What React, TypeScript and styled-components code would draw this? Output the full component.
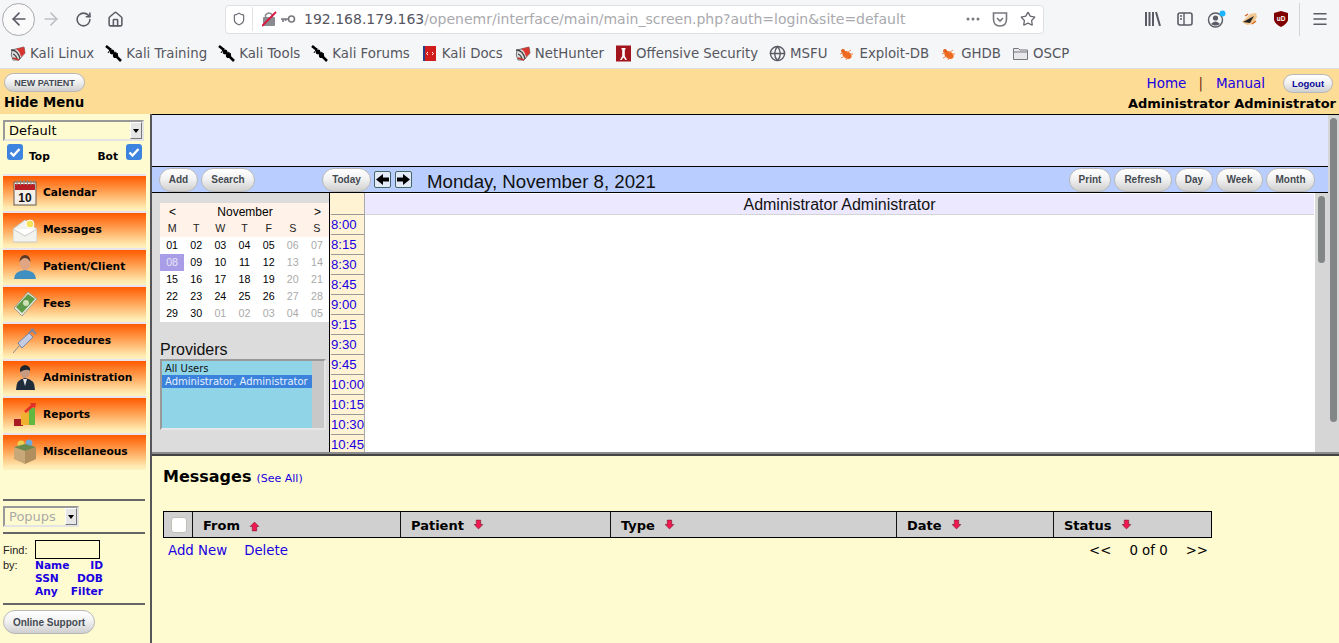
import { ReactNode } from "react";
import styled, { createGlobalStyle } from "styled-components";
import {
  ArrowLeft,
  ArrowRight,
  Globe,
  Home,
  Menu,
  RotateCw,
  Shield,
  Star,
} from "lucide-react";

const GlobalStyle = createGlobalStyle`
  html, body {
    margin: 0;
    padding: 0;
    background: #fffbd0;
  }
  * {
    box-sizing: border-box;
  }
`;

const sans = `"DejaVu Sans", sans-serif`;
const arial = `"Liberation Sans", Arial, sans-serif`;

const Page = styled.div`
  width: 1339px;
  height: 643px;
  display: flex;
  flex-direction: column;
  overflow: hidden;
  font-family: ${arial};
`;

/* browser chrome */
const NavBar = styled.div`
  height: 42px;
  background: #f5f6f8;
  display: flex;
  align-items: center;
  color: #5b5b66;
  padding-left: 2px;
`;

const BackCircle = styled.div`
  width: 33px;
  height: 33px;
  border-radius: 50%;
  border: 1px solid #a8a8ae;
  background: #fafafb;
  display: flex;
  align-items: center;
  justify-content: center;
  margin-top: -4px;
`;

const NavSlot = styled.div<{ $w: number; $faded?: boolean }>`
  width: ${(p) => p.$w}px;
  display: flex;
  align-items: center;
  justify-content: center;
  margin-top: -4px;
  color: ${(p) => (p.$faded ? "#c0c0c4" : "#5b5b66")};
`;

const UrlBar = styled.div`
  width: 819px;
  height: 29px;
  margin-left: 94px;
  margin-top: -4px;
  background: #fff;
  border: 1px solid #e0e0e4;
  border-radius: 4px;
  display: flex;
  align-items: center;
  padding-left: 6px;
  font-family: ${sans};
  font-size: 14px;
  color: #a9a9ae;
`;

const UrlSep = styled.div`
  width: 1px;
  height: 24px;
  background: #e4e4e8;
  margin: 0 9px 0 6px;
`;

const UrlHost = styled.span`
  color: #55555f;
`;

const UrlText = styled.div`
  margin-left: 8px;
  white-space: nowrap;
  flex: 1;
`;

const UrlActions = styled.div`
  display: flex;
  align-items: center;
  gap: 12px;
  padding-right: 7px;
  color: #6a6a72;
`;

const ToolIcons = styled.div`
  display: flex;
  align-items: center;
  margin-left: 93px;
  margin-top: -4px;
  color: #5b5b66;
`;

const ToolSlot = styled.div<{ $w?: number }>`
  width: ${(p) => p.$w ?? 32}px;
  display: flex;
  justify-content: center;
  align-items: center;
`;

const ToolSep = styled.div`
  width: 1px;
  height: 33px;
  background: #d4d4d8;
  margin: 0 6px 0 2px;
`;

const BookmarkBar = styled.div`
  height: 27px;
  background: #f5f6f8;
  border-bottom: 1px solid #dcdde0;
  display: flex;
  align-items: center;
  gap: 11px;
  padding: 0 0 4px 9px;
  font-family: ${sans};
  font-size: 13.33px;
  color: #56565f;
`;

const Bookmark = styled.div`
  display: flex;
  align-items: center;
  gap: 4px;
  white-space: nowrap;
`;

const BookmarkImg = ({ children }: { children: ReactNode }) => (
  <svg width="17" height="17" viewBox="0 0 17 17">
    {children}
  </svg>
);

const KaliIcon = () => (
  <BookmarkImg>
    <path d="M3 5 L15 2 L16 8 L10 15 L4 15 Q1 10 3 5 Z" fill="#dedede" stroke="#555" strokeWidth="0.8" />
    <path d="M7 4 L15 2 L16 8 L12 12 Q11 6 7 4 Z" fill="#d9342f" />
    <path d="M2 5 Q9 5 11 14 M4 9 Q7 10 8 14" stroke="#444" strokeWidth="1.3" fill="none" />
    <path d="M4 13 L10 15" stroke="#c5302b" strokeWidth="1.5" />
  </BookmarkImg>
);

const ToolIcon = () => (
  <BookmarkImg>
    <path d="M1 1 L6 5 M7 6 L12 12 M12 12 L16 16" stroke="#000" strokeWidth="2.6" />
    <circle cx="7" cy="7" r="2.4" fill="#000" />
    <circle cx="10.5" cy="10.5" r="2.6" fill="#000" />
    <path d="M3 8 L6 3 M13 9 L10 7" stroke="#000" strokeWidth="1" />
  </BookmarkImg>
);

const DocsIcon = () => (
  <BookmarkImg>
    <rect x="2" y="1" width="13" height="15" fill="#d01c1c" />
    <rect x="2" y="1" width="2" height="15" fill="#27408b" />
    <path d="M7 7 L5.5 8.5 L7 10 M11 7 L12.5 8.5 L11 10" stroke="#fff" strokeWidth="1" fill="none" />
  </BookmarkImg>
);

const OffsecIcon = () => (
  <BookmarkImg>
    <rect x="1" y="0.5" width="15" height="16" fill="#a3151c" />
    <path d="M6.5 3 H10.5 V4.5 H9.8 V11 L12 15 H10.5 L8.5 12.5 L6.5 15 H5 L7.2 11 V4.5 H6.5 Z" fill="#fff" />
  </BookmarkImg>
);

const BugIcon = () => (
  <BookmarkImg>
    <ellipse cx="9" cy="10" rx="5" ry="3.5" transform="rotate(30 9 10)" fill="#ee6a1f" />
    <circle cx="5" cy="6" r="2" fill="#e5601a" />
    <path d="M2 9 L5 8 M3 13 L7 11 M8 15 L9 12 M13 5 L9 8 M15 9 L12 9" stroke="#f08a4a" strokeWidth="1" />
  </BookmarkImg>
);

const FolderIcon = () => (
  <BookmarkImg>
    <path d="M1.5 14.5 V3.5 H6.5 L8 5 H15.5 V14.5 Z" fill="#e8e8ea" stroke="#77777d" strokeWidth="1" />
    <path d="M1.5 7 H15.5" stroke="#77777d" strokeWidth="1" />
  </BookmarkImg>
);

const bookmarks: { label: string; icon: ReactNode }[] = [
  { label: "Kali Linux", icon: <KaliIcon /> },
  { label: "Kali Training", icon: <ToolIcon /> },
  { label: "Kali Tools", icon: <ToolIcon /> },
  { label: "Kali Forums", icon: <ToolIcon /> },
  { label: "Kali Docs", icon: <DocsIcon /> },
  { label: "NetHunter", icon: <KaliIcon /> },
  { label: "Offensive Security", icon: <OffsecIcon /> },
  { label: "MSFU", icon: <Globe size={17} color="#5b5b66" /> },
  { label: "Exploit-DB", icon: <BugIcon /> },
  { label: "GHDB", icon: <BugIcon /> },
  { label: "OSCP", icon: <FolderIcon /> },
];

/* openemr header */
const TopBar = styled.header`
  height: 45px;
  background: #fddc95;
  display: flex;
  justify-content: space-between;
  padding: 4px 3px 0 4px;
  font-family: ${sans};
`;

const BarSide = styled.div<{ $right?: boolean }>`
  display: flex;
  flex-direction: column;
  align-items: ${(p) => (p.$right ? "flex-end" : "flex-start")};
`;

const BarTitle = styled.div<{ $size?: number }>`
  font-size: ${(p) => p.$size ?? 13.33}px;
  font-weight: bold;
  color: #000;
  margin-top: 1px;
  line-height: 19px;
`;

const BarLinks = styled.div`
  display: flex;
  align-items: center;
  height: 20px;
  font-size: 13.5px;
  padding-right: 3px;
`;

const Link = styled.a<{ $gap?: number }>`
  color: #1a00e0;
  margin-left: ${(p) => p.$gap ?? 0}px;
`;

const Pipe = styled.span`
  color: #6a2a10;
  margin-left: 12px;
`;

const Pill = styled.button<{ $w: number; $h?: number; $size?: number; $blue?: boolean; $gap?: number }>`
  width: ${(p) => p.$w}px;
  height: ${(p) => p.$h ?? 24}px;
  margin-left: ${(p) => p.$gap ?? 0}px;
  padding: 0;
  border: 1px solid #b8b8b8;
  border-radius: 12px;
  background: linear-gradient(#ffffff, #f2f2f2 45%, #cfcfcf);
  font-family: ${arial};
  font-weight: bold;
  font-size: ${(p) => p.$size ?? 10}px;
  color: ${(p) => (p.$blue ? "#0a0a9a" : "#444a52")};
  flex-shrink: 0;
`;

/* main area */
const Main = styled.div`
  flex: 1;
  display: flex;
  min-height: 0;
`;

const Sidebar = styled.nav`
  width: 150px;
  background: #fffbd0;
  padding: 6px 0 0 3px;
  display: flex;
  flex-direction: column;
`;

const VDivider = styled.div`
  width: 2px;
  background: #55555a;
  flex-shrink: 0;
`;

const Select = styled.div<{ $w: number; $muted?: boolean }>`
  width: ${(p) => p.$w}px;
  height: 21px;
  border: 2px solid;
  border-color: #999 #e4e4e4 #e4e4e4 #999;
  display: flex;
  align-items: center;
  justify-content: space-between;
  font-family: ${sans};
  font-size: 13px;
  padding-left: 4px;
  color: ${(p) => (p.$muted ? "#aaa" : "#000")};
  background: #fffbd0;
`;

const SelectArrow = styled.div`
  width: 12px;
  height: 17px;
  background: #e6e6e6;
  border: 1px solid;
  border-color: #fff #777 #777 #fff;
  display: flex;
  align-items: center;
  justify-content: center;
  &::after {
    content: "";
    border-left: 3px solid transparent;
    border-right: 3px solid transparent;
    border-top: 4px solid #000;
  }
`;

const ToggleRow = styled.div`
  display: flex;
  justify-content: space-between;
  align-items: flex-start;
  width: 135px;
  margin: 3px 0 0 4px;
  height: 30px;
  font-family: ${sans};
  font-size: 10.67px;
  font-weight: bold;
`;

const ToggleGroup = styled.div<{ $gap: number }>`
  display: flex;
  gap: ${(p) => p.$gap}px;
`;

const ToggleLabel = styled.span`
  margin-top: 6px;
`;

const Check = () => (
  <svg width="16" height="16" viewBox="0 0 16 16">
    <rect width="16" height="16" rx="3" fill="#3d84e0" />
    <path d="M3.5 8.5 L6.5 11.5 L12.5 5" stroke="#fff" strokeWidth="2.4" fill="none" />
  </svg>
);

const NavItem = styled.div`
  width: 143px;
  height: 37px;
  border-top: 2px solid #e9e4ee;
  background: linear-gradient(#ff5a00, #ff9a4a 40%, #ffeab0 90%, #fff2c0);
  display: flex;
  align-items: center;
  padding: 0 0 2px 10px;
  gap: 6px;
  font-family: ${sans};
  font-size: 10.67px;
  font-weight: bold;
  color: #000;
`;

const NavIcon = ({ children }: { children: ReactNode }) => (
  <svg width="24" height="26" viewBox="0 0 24 26" style={{ flexShrink: 0 }}>
    {children}
  </svg>
);

const icons: Record<string, ReactNode> = {
  Calendar: (
    <NavIcon>
      <rect x="1" y="2" width="22" height="23" fill="#f4f0e8" stroke="#665a50" />
      <rect x="2" y="4" width="20" height="6" fill="#b81e24" />
      <path d="M4 0 V5 M7.5 0 V5 M11 0 V5 M14.5 0 V5 M18 0 V5 M21 0 V5" stroke="#8a8a8a" />
      <text x="12" y="22" textAnchor="middle" fontFamily="Liberation Sans" fontWeight="bold" fontSize="12" fill="#111">
        10
      </text>
    </NavIcon>
  ),
  Messages: (
    <NavIcon>
      <path d="M0 12 L12 3 L24 12 V25 H0 Z" fill="#f2f2ee" stroke="#c8c8c4" />
      <path d="M0 12 L12 19 L24 12" fill="#fff" stroke="#c8c8c4" />
      <circle cx="17" cy="7" r="4" fill="#f4e25a" stroke="#fff" />
    </NavIcon>
  ),
  "Patient/Client": (
    <NavIcon>
      <path d="M1 25 Q1 17 12 16 Q23 17 23 25 Z" fill="#3f8fc0" />
      <ellipse cx="12" cy="9" rx="5.5" ry="7" fill="#e0a582" />
      <path d="M6.5 8 Q7 1 12 1 Q17 1 17.5 8 Q15 4 12 4 Q9 4 6.5 8" fill="#5a3a26" />
    </NavIcon>
  ),
  Fees: (
    <NavIcon>
      <path d="M1 17 L15 1 L24 8 L9 25 Z" fill="#e8e6d8" stroke="#98a088" />
      <path d="M3 16 L15 3 L22 8 L9 22 Z" fill="#5a9a48" />
      <circle cx="13" cy="12" r="3" fill="#d0e0b8" />
    </NavIcon>
  ),
  Procedures: (
    <NavIcon>
      <path d="M0 25 L7 17" stroke="#8a8a90" strokeWidth="1" />
      <path d="M5 15 L16 5 L20 9 L9 20 Z" fill="#c4cce4" stroke="#7a84a4" />
      <path d="M16 5 L21 1 M18 1 L23 6" stroke="#8088a0" strokeWidth="2" />
    </NavIcon>
  ),
  Administration: (
    <NavIcon>
      <path d="M3 25 Q3 14 12 13 Q22 14 22 25 Z" fill="#1e2c3c" />
      <path d="M10 14 L12 21 L14 14 Z" fill="#e8e8e8" />
      <ellipse cx="12" cy="7" rx="5" ry="6" fill="#c89a80" />
      <path d="M7 7 Q6 1 12 0 Q18 1 17 6 Q14 3 7 7" fill="#20252c" />
    </NavIcon>
  ),
  Reports: (
    <NavIcon>
      <rect x="1" y="17" width="9" height="7" fill="#a81c24" />
      <rect x="8" y="11" width="8" height="12" fill="#f0b030" />
      <rect x="16" y="6" width="6" height="17" fill="#60b840" />
      <path d="M11 9 L18 3 L17 1 L23 1 L22 6 L20 5 L13 11 Z" fill="#e03028" />
    </NavIcon>
  ),
  Miscellaneous: (
    <NavIcon>
      <path d="M1 8 L12 12 L12 25 L1 20 Z" fill="#c8a878" />
      <path d="M23 8 L12 12 L12 25 L23 20 Z" fill="#b08e5e" />
      <circle cx="8" cy="5" r="3.5" fill="#e8d050" />
      <circle cx="16" cy="4" r="3.5" fill="#70a8d8" />
      <path d="M1 8 L12 5 L23 8 L12 12 Z" fill="#6a8a50" />
    </NavIcon>
  ),
};

const menu = Object.keys(icons);

const NavList = styled.div`
  display: flex;
  flex-direction: column;
`;

const Rule = styled.div<{ $top: number }>`
  width: 142px;
  height: 2px;
  background: #666;
  margin-top: ${(p) => p.$top}px;
`;

const PopupSlot = styled.div`
  margin-top: 5px;
`;

const FindGrid = styled.div`
  display: grid;
  grid-template-columns: 32px 65px;
  width: 142px;
  margin-top: 6px;
  font-size: 11px;
  color: #222;
  align-items: center;
`;

const FindInput = styled.div`
  height: 19px;
  border: 1.5px solid #000;
  background: #fffbd0;
`;

const ByRow = styled.div`
  display: flex;
  font-size: 11px;
  color: #222;
`;

const ByLabel = styled.span`
  width: 32px;
  line-height: 13px;
`;

const ByLinks = styled.div`
  display: grid;
  grid-template-columns: 35px 33px;
  font-family: ${sans};
  font-size: 10.67px;
  font-weight: bold;
  line-height: 13px;
  color: #1a00e0;
  & > :nth-child(even) {
    text-align: right;
  }
`;

const SupportSlot = styled.div`
  margin-top: 5px;
`;

/* calendar frame */
const Content = styled.div`
  flex: 1;
  display: flex;
  flex-direction: column;
  min-width: 0;
`;

const TopFrame = styled.div`
  height: 340px;
  display: flex;
  border-top: 1px solid #000;
  border-bottom: 2px solid #8c8c8c;
`;

const FrameBody = styled.div`
  flex: 1;
  display: flex;
  flex-direction: column;
  min-width: 0;
`;

const Scrollbar = styled.div<{ $w: number; $pad: number }>`
  width: ${(p) => p.$w}px;
  background: #d6d6d6;
  padding: 3px ${(p) => p.$pad}px;
  flex-shrink: 0;
`;

const Thumb = styled.div<{ $h: number }>`
  height: ${(p) => p.$h}px;
  background: #838686;
  border-radius: 4px;
`;

const BlueStrip = styled.div`
  height: 51px;
  background: #e0e6ff;
`;

const CalBar = styled.div`
  height: 27px;
  background: #b9ceff;
  border-top: 1px solid #000;
  border-bottom: 1px solid #000;
  display: flex;
  align-items: center;
  padding: 0 13px 0 7px;
  gap: 3px;
`;

const ArrowBtn = styled.div<{ $gap?: number }>`
  width: 17px;
  height: 17px;
  margin-left: ${(p) => p.$gap ?? 0}px;
  border: 1px solid #466;
  border-radius: 2px;
  background: #e4ebf8;
  display: flex;
  align-items: center;
  justify-content: center;
  flex-shrink: 0;
`;

const DateTitle = styled.div`
  margin-left: 12px;
  margin-top: 4px;
  font-size: 18.67px;
  color: #111;
  flex: 1;
  white-space: nowrap;
`;

const CalBody = styled.div`
  flex: 1;
  display: flex;
  min-height: 0;
`;

const LeftPanel = styled.div`
  width: 177px;
  background: #dcdcdc;
  padding: 10px 0 0 8px;
  flex-shrink: 0;
`;

const MiniCal = styled.div`
  display: grid;
  grid-template-columns: repeat(7, 24.15px);
  grid-auto-rows: 17px;
  background: #fff;
  font-size: 10.67px;
`;

const MonthRow = styled.div`
  grid-column: 1 / -1;
  background: #fff2e8;
  display: flex;
  justify-content: space-between;
  align-items: center;
  padding: 0 8px 0 9px;
  font-size: 12px;
`;

const DayCell = styled.div<{ $head?: boolean; $out?: boolean; $sel?: boolean }>`
  display: flex;
  align-items: center;
  justify-content: center;
  padding-bottom: 1px;
  background: ${(p) => (p.$sel ? "#aa9de8" : p.$head ? "#fff2e8" : "#fff")};
  color: ${(p) => (p.$sel ? "#e4e4f4" : p.$out ? "#aaa" : p.$head ? "#222" : "#000")};
`;

const ProvidersTitle = styled.div`
  margin-top: 18px;
  font-size: 16px;
  line-height: 19px;
  color: #111;
`;

const ProviderBox = styled.div`
  width: 166px;
  height: 71px;
  border: 2px solid;
  border-color: #999 #e6e6e6 #e6e6e6 #999;
  background: #90d4e8;
  display: flex;
`;

const ProviderList = styled.div`
  flex: 1;
  font-family: ${sans};
  font-size: 10px;
  line-height: 13px;
  color: #111;
  padding-top: 1px;
  min-width: 0;
`;

const ProviderRow = styled.div<{ $sel?: boolean }>`
  padding-left: 3px;
  white-space: nowrap;
  background: ${(p) => (p.$sel ? "#3b82dc" : "transparent")};
  color: ${(p) => (p.$sel ? "#e6f0ff" : "#111")};
`;

const ProviderTrack = styled.div`
  width: 12px;
  background: #c8c8c8;
`;

const TimeCol = styled.div`
  width: 36px;
  border-left: 1.5px solid #000;
  border-right: 1px solid #aaa;
  background: #fff3d4;
  padding-top: 21px;
  overflow: hidden;
  flex-shrink: 0;
`;

const TimeSlot = styled.div`
  height: 20px;
  border-top: 1px solid #999;
  font-size: 13.2px;
  line-height: 20px;
  color: #1a00e0;
  margin-left: 1px;
`;

const DayCol = styled.div`
  flex: 1;
  background: #fff;
  padding: 1px 1px 0 0;
`;

const DayHead = styled.div`
  height: 21px;
  background: #ece8ff;
  border-bottom: 1px solid #d4d4d4;
  text-align: center;
  font-size: 16px;
  line-height: 21px;
  color: #111;
`;

/* messages frame */
const BottomFrame = styled.div`
  flex: 1;
  background: #fffbd0;
  border-top: 2px solid #444;
  padding: 11px 0 0 11px;
  font-family: ${sans};
`;

const MsgTitle = styled.div`
  display: flex;
  align-items: baseline;
  gap: 5px;
  height: 44px;
`;

const MsgHeading = styled.span`
  font-size: 16px;
  font-weight: bold;
  color: #000;
`;

const SeeAll = styled.a`
  font-size: 11px;
  color: #1a00e0;
`;

const MsgTable = styled.div`
  width: 1049px;
  height: 27px;
  display: grid;
  grid-template-columns: 28px 208px 210px 286px 157px 1fr;
  border: 1.5px solid #000;
  background: #d0d0d0;
`;

const Th = styled.div<{ $first?: boolean }>`
  display: flex;
  align-items: center;
  gap: 9px;
  padding: ${(p) => (p.$first ? "0 0 0 7px" : "2px 0 0 10px")};
  border-left: ${(p) => (p.$first ? "none" : "1px solid #111")};
  font-size: 13px;
  font-weight: bold;
  color: #000;
`;

const HeadBox = styled.div`
  width: 16px;
  height: 16px;
  border-radius: 3px;
  background: #fff;
  border: 1px solid #c0c0b8;
`;

const SortArrow = ({ up }: { up?: boolean }) => (
  <svg width="11" height="11" viewBox="0 0 10 10" style={{ marginTop: up ? 2 : -3 }}>
    <path
      d={up ? "M5 1 L9 5 L7 5 L7 9 L3 9 L3 5 L1 5 Z" : "M3 1 L7 1 L7 5 L9 5 L5 9 L1 5 L3 5 Z"}
      fill="#f01a50"
      stroke="#701028"
      strokeWidth="0.5"
    />
  </svg>
);

const MsgFooter = styled.div`
  width: 1049px;
  display: flex;
  align-items: center;
  height: 24px;
  padding: 0 4px 0 5px;
  font-size: 13.33px;
`;

const Pager = styled.div`
  margin-left: auto;
  display: flex;
  gap: 18px;
  color: #000;
`;

const days = (from: number, to: number) =>
  Array.from({ length: to - from + 1 }, (_, i) => String(from + i).padStart(2, "0"));

const cells = [...days(1, 30), ...days(1, 5)];
const times = ["8:00", "8:15", "8:30", "8:45", "9:00", "9:15", "9:30", "9:45", "10:00", "10:15", "10:30", "10:45"];
const columns = ["From", "Patient", "Type", "Date", "Status"];

const NavArrow = ({ right }: { right?: boolean }) => (
  <svg width="13" height="11" viewBox="0 0 13 11">
    <path
      d={right ? "M0 3.5 H6 V0 L13 5.5 L6 11 V7.5 H0 Z" : "M13 3.5 H7 V0 L0 5.5 L7 11 V7.5 H13 Z"}
      fill="#000"
    />
  </svg>
);

export default function App() {
  return (
    <Page>
      <GlobalStyle />
      <NavBar>
        <BackCircle>
          <ArrowLeft size={20} strokeWidth={2} />
        </BackCircle>
        <NavSlot $w={32} $faded>
          <ArrowRight size={20} strokeWidth={2} />
        </NavSlot>
        <NavSlot $w={32}>
          <RotateCw size={17} strokeWidth={2.2} />
        </NavSlot>
        <NavSlot $w={32}>
          <Home size={17} strokeWidth={2.2} />
        </NavSlot>
        <UrlBar>
          <Shield size={14} strokeWidth={2} color="#6a6a72" />
          <UrlSep />
          <svg width="34" height="16" viewBox="0 0 34 16">
            <rect x="1" y="6" width="12" height="9" rx="1" fill="#8a8a90" />
            <path d="M3.5 6 V4 Q7 0 10.5 4 V6" stroke="#8a8a90" strokeWidth="1.5" fill="none" />
            <path d="M0 15 L14 1" stroke="#e0123c" strokeWidth="1.8" />
            <circle cx="29.5" cy="8" r="3" stroke="#77777d" strokeWidth="1.6" fill="none" />
            <path d="M26 8 H19 M21 8 V11 M23.5 8 V10" stroke="#77777d" strokeWidth="1.6" />
          </svg>
          <UrlText>
            <UrlHost>192.168.179.163</UrlHost>/openemr/interface/main/main_screen.php?auth=login&amp;site=default
          </UrlText>
          <UrlActions>
            <svg width="14" height="4" viewBox="0 0 14 4">
              <circle cx="2" cy="2" r="1.5" fill="#77777d" />
              <circle cx="7" cy="2" r="1.5" fill="#77777d" />
              <circle cx="12" cy="2" r="1.5" fill="#77777d" />
            </svg>
            <svg width="16" height="15" viewBox="0 0 16 15">
              <path d="M1.5 1 H14.5 V7 Q14.5 14 8 14 Q1.5 14 1.5 7 Z" fill="none" stroke="#77777d" strokeWidth="1.6" />
              <path d="M5 6 L8 9 L11 6" fill="none" stroke="#77777d" strokeWidth="1.6" />
            </svg>
            <Star size={16} strokeWidth={2} />
          </UrlActions>
        </UrlBar>
        <ToolIcons>
          <ToolSlot>
            <svg width="16" height="14" viewBox="0 0 16 14">
              <path d="M1 0 V14 M4.5 0 V14 M8 0 V14 M11 0 L15 14" stroke="#5b5b66" strokeWidth="2" />
            </svg>
          </ToolSlot>
          <ToolSlot>
            <svg width="16" height="14" viewBox="0 0 16 14">
              <rect x="1" y="1" width="14" height="12" rx="2" fill="none" stroke="#5b5b66" strokeWidth="1.6" />
              <path d="M7 1 V13 M3 4 H5 M3 7 H5" stroke="#5b5b66" strokeWidth="1.4" />
            </svg>
          </ToolSlot>
          <ToolSlot>
            <svg width="20" height="18" viewBox="0 0 20 18">
              <circle cx="8.5" cy="10" r="7" fill="none" stroke="#5b5b66" strokeWidth="1.4" />
              <circle cx="8.5" cy="8" r="2.6" fill="#5b5b66" />
              <path d="M4 14 Q8.5 9 13 14 Q8.5 17 4 14" fill="#5b5b66" />
              <circle cx="15.5" cy="3.5" r="3" fill="#1eb4ff" />
            </svg>
          </ToolSlot>
          <ToolSlot>
            <svg width="17" height="14" viewBox="0 0 17 14">
              <path d="M1 10 L9 2 L15 1 L16 5 L12 12 L6 13 Z" fill="#f0c890" />
              <path d="M2 10 L13 4 L9 11 Z" fill="#222" />
              <path d="M4 4 L7 2 M11 12 L15 9" stroke="#d86820" strokeWidth="1.5" />
            </svg>
          </ToolSlot>
          <ToolSlot>
            <svg width="14" height="16" viewBox="0 0 14 16">
              <path d="M7 0 L14 2 V9 Q13 13 7 16 Q1 13 0 9 V2 Z" fill="#800000" />
              <text x="7" y="10" textAnchor="middle" fontSize="6.5" fontWeight="bold" fontFamily="Liberation Sans" fill="#fff">
                uD
              </text>
            </svg>
          </ToolSlot>
          <ToolSep />
          <ToolSlot $w={28}>
            <Menu size={18} strokeWidth={2} />
          </ToolSlot>
        </ToolIcons>
      </NavBar>
      <BookmarkBar>
        {bookmarks.map((b) => (
          <Bookmark key={b.label}>
            {b.icon}
            {b.label}
          </Bookmark>
        ))}
      </BookmarkBar>
      <TopBar>
        <BarSide>
          <Pill $w={81} $h={19} $size={9}>
            NEW PATIENT
          </Pill>
          <BarTitle>Hide Menu</BarTitle>
        </BarSide>
        <BarSide $right>
          <BarLinks>
            <Link>Home</Link>
            <Pipe>|</Pipe>
            <Link $gap={13}>Manual</Link>
            <Pill $w={50} $h={19} $size={9.5} $blue $gap={18}>
              Logout
            </Pill>
          </BarLinks>
          <BarTitle $size={13}>Administrator Administrator</BarTitle>
        </BarSide>
      </TopBar>
      <Main>
        <Sidebar>
          <Select $w={141}>
            Default
            <SelectArrow />
          </Select>
          <ToggleRow>
            <ToggleGroup $gap={6}>
              <Check />
              <ToggleLabel>Top</ToggleLabel>
            </ToggleGroup>
            <ToggleGroup $gap={8}>
              <ToggleLabel>Bot</ToggleLabel>
              <Check />
            </ToggleGroup>
          </ToggleRow>
          <NavList>
            {menu.map((m) => (
              <NavItem key={m}>
                {icons[m]}
                {m}
              </NavItem>
            ))}
          </NavList>
          <Rule $top={29} />
          <PopupSlot>
            <Select $w={76} $muted>
              Popups
              <SelectArrow />
            </Select>
          </PopupSlot>
          <Rule $top={5} />
          <FindGrid>
            <span>Find:</span>
            <FindInput />
          </FindGrid>
          <ByRow>
            <ByLabel>by:</ByLabel>
            <ByLinks>
              <span>Name</span>
              <span>ID</span>
              <span>SSN</span>
              <span>DOB</span>
              <span>Any</span>
              <span>Filter</span>
            </ByLinks>
          </ByRow>
          <Rule $top={5} />
          <SupportSlot>
            <Pill $w={92} $size={10}>
              Online Support
            </Pill>
          </SupportSlot>
        </Sidebar>
        <VDivider />
        <Content>
          <TopFrame>
            <FrameBody>
              <BlueStrip />
              <CalBar>
                <Pill $w={39}>Add</Pill>
                <Pill $w={54}>Search</Pill>
                <Pill $w={49} $gap={64}>
                  Today
                </Pill>
                <ArrowBtn>
                  <NavArrow />
                </ArrowBtn>
                <ArrowBtn $gap={1}>
                  <NavArrow right />
                </ArrowBtn>
                <DateTitle>Monday, November 8, 2021</DateTitle>
                <Pill $w={42}>Print</Pill>
                <Pill $w={58}>Refresh</Pill>
                <Pill $w={38}>Day</Pill>
                <Pill $w={47}>Week</Pill>
                <Pill $w={49}>Month</Pill>
              </CalBar>
              <CalBody>
                <LeftPanel>
                  <MiniCal>
                    <MonthRow>
                      <span>&lt;</span>
                      <span>November</span>
                      <span>&gt;</span>
                    </MonthRow>
                    {["M", "T", "W", "T", "F", "S", "S"].map((d, i) => (
                      <DayCell key={i} $head>
                        {d}
                      </DayCell>
                    ))}
                    {cells.map((d, i) => {
                      const weekend = i % 7 > 4;
                      return (
                        <DayCell key={i} $out={weekend || i >= 30} $sel={i === 7}>
                          {d}
                        </DayCell>
                      );
                    })}
                  </MiniCal>
                  <ProvidersTitle>Providers</ProvidersTitle>
                  <ProviderBox>
                    <ProviderList>
                      <ProviderRow>All Users</ProviderRow>
                      <ProviderRow $sel>Administrator, Administrator</ProviderRow>
                    </ProviderList>
                    <ProviderTrack />
                  </ProviderBox>
                </LeftPanel>
                <TimeCol>
                  {times.map((t) => (
                    <TimeSlot key={t}>{t}</TimeSlot>
                  ))}
                </TimeCol>
                <DayCol>
                  <DayHead>Administrator Administrator</DayHead>
                </DayCol>
                <Scrollbar $w={13} $pad={3}>
                  <Thumb $h={67} />
                </Scrollbar>
              </CalBody>
            </FrameBody>
            <Scrollbar $w={11} $pad={2}>
              <Thumb $h={304} />
            </Scrollbar>
          </TopFrame>
          <BottomFrame>
            <MsgTitle>
              <MsgHeading>Messages</MsgHeading>
              <SeeAll>(See All)</SeeAll>
            </MsgTitle>
            <MsgTable>
              <Th $first>
                <HeadBox />
              </Th>
              {columns.map((c, i) => (
                <Th key={c}>
                  {c}
                  <SortArrow up={i === 0} />
                </Th>
              ))}
            </MsgTable>
            <MsgFooter>
              <Link>Add New</Link>
              <Link $gap={17}>Delete</Link>
              <Pager>
                <span>&lt;&lt;</span>
                <span>0 of 0</span>
                <span>&gt;&gt;</span>
              </Pager>
            </MsgFooter>
          </BottomFrame>
        </Content>
      </Main>
    </Page>
  );
}
